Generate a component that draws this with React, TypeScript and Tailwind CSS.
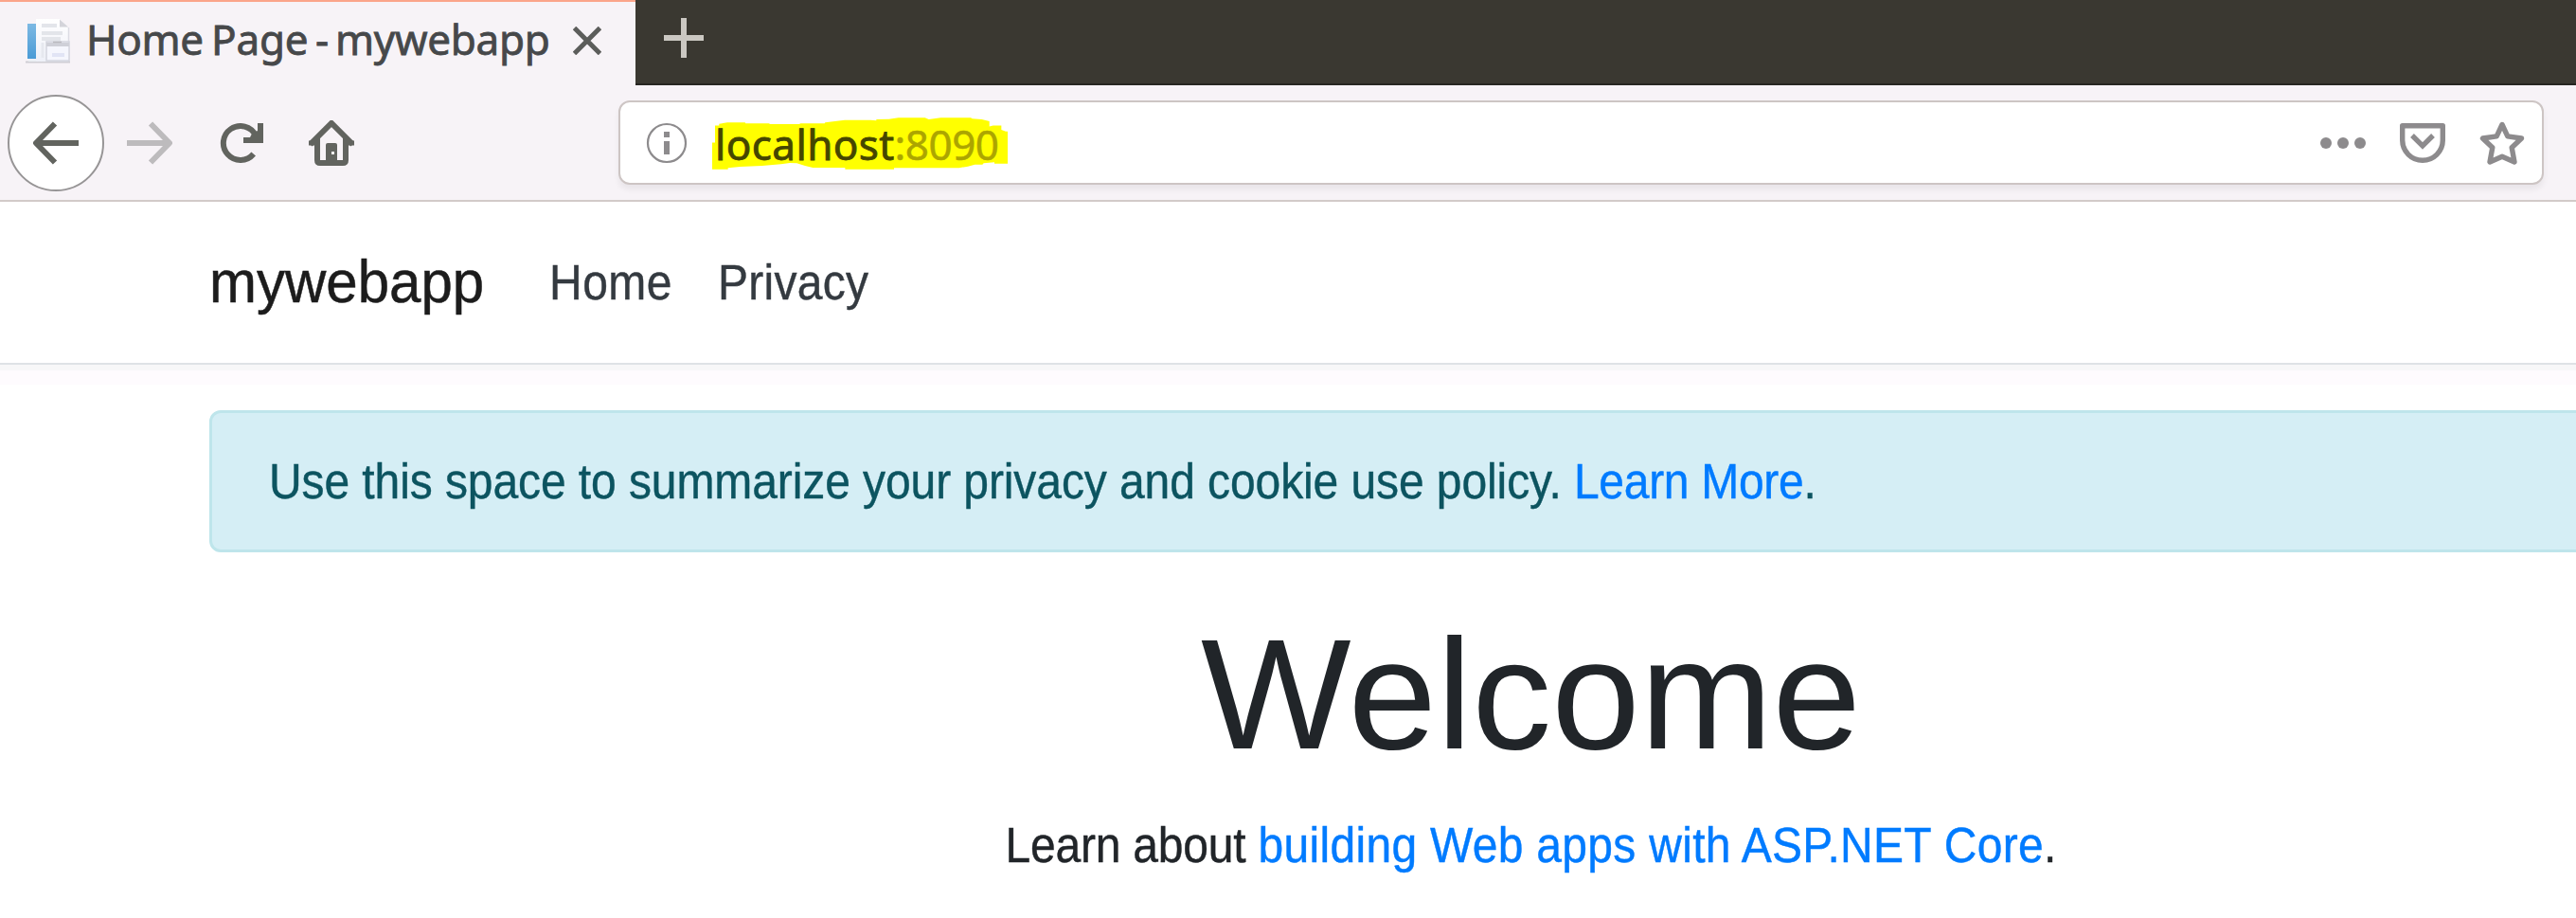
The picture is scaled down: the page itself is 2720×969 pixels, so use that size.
import type { ReactNode } from "react";

function Icon({ className = "", children }: { className?: string; children: ReactNode }) {
  return (
    <svg viewBox="0 0 48 48" className={`size-12 shrink-0 ${className}`} fill="none" stroke="currentColor" strokeWidth="6">
      {children}
    </svg>
  );
}

function Favicon() {
  return (
    <svg viewBox="0 0 48 48" className="size-12 shrink-0" fill="none">
      <defs>
        <linearGradient id="spine" x1="0" y1="0" x2="0" y2="1">
          <stop offset="0" stopColor="#7db9e3" />
          <stop offset="1" stopColor="#4a9bd6" />
        </linearGradient>
        <linearGradient id="sheet" x1="0" y1="0" x2="0" y2="1">
          <stop offset="0" stopColor="#ffffff" />
          <stop offset="1" stopColor="#eef0f8" />
        </linearGradient>
      </defs>
      <path d="M1 46.500H48" stroke="#cfced4" strokeWidth="2" />
      <path d="M4 43.500H13V46H4z" fill="#eceff4" />
      <rect x="3" y="6" width="9" height="37" fill="url(#spine)" />
      <path d="M12 1H37L46.500 11V46H12z" fill="url(#sheet)" />
      <path d="M37 1.500V9.500H46L37 1.500z" fill="#d4d4da" />
      <path d="M46.500 10V46" stroke="#dcdce4" strokeWidth="1.500" />
      <path d="M18 8H34M18 16H40M18 22H38" stroke="#e3e5ea" strokeWidth="4" />
      <path d="M19 26V42" stroke="#e6e8ef" strokeWidth="3" />
      <rect x="23" y="25" width="24" height="20" fill="#f5f6fd" stroke="#d3d5de" strokeWidth="1.500" />
      <path d="M23 28H47" stroke="#cfd0d8" strokeWidth="4" />
      <path d="M30 25.500H39" stroke="#b9b9bf" strokeWidth="1.500" />
      <path d="M29 39H42" stroke="#e1e4f5" strokeWidth="4" />
    </svg>
  );
}

function TabStrip() {
  return (
    <div className="flex h-[90px]">
      <div className="flex h-full w-[671px] shrink-0 items-start border-t-2 border-[#fba58a] bg-[#f7f3f7] pl-[26px]">
        <div className="pt-[17px]">
          <Favicon />
        </div>
        <div className="ml-[17px] flex pt-[9px] font-['Noto_Sans',sans-serif] text-[44px] leading-[60px] whitespace-nowrap text-[#46484a] [-webkit-text-stroke:0.8px_#46484a]">
          <span className="w-[132px] tracking-[-0.4px]">Home</span>
          <span className="w-[110px] tracking-[-0.2px]">Page</span>
          <span className="w-[21px]">-</span>
          <span className="w-[232px] tracking-[-0.3px]">mywebapp</span>
        </div>
        <svg viewBox="0 0 30 30" className="mt-[26px] ml-[19px] size-[30px]" stroke="#5c5d5b" strokeWidth="5">
          <path d="M1.500 1.500L28.500 28.500M28.500 1.500L1.500 28.500" />
        </svg>
      </div>
      <div className="flex h-full grow items-start border-b-2 border-[#272622] bg-[#3a3831] pl-[30px]">
        <svg viewBox="0 0 42 42" className="mt-[19px] size-[42px]" stroke="#cbc8c2" strokeWidth="6">
          <path d="M21 0V42M0 21H42" />
        </svg>
      </div>
    </div>
  );
}

function UrlBar() {
  return (
    <div className="mt-4 ml-[279px] flex h-[89px] w-[2033px] shrink-0 items-center rounded-[12px] border-2 border-[#cdc5c4] bg-white pl-[25px] shadow-[0_5px_6px_rgba(0,0,0,0.06)]">
      <Icon className="text-[#8d8b8d]">
        <circle cx="24" cy="24" r="20" strokeWidth="2.200" />
        <path d="M24 12V18M24 22V36" />
      </Icon>
      <div className="relative ml-[25px] flex font-['Noto_Sans',sans-serif] text-[44px] leading-[60px] whitespace-nowrap">
        <svg viewBox="336 104 936 164" className="absolute top-[3px] left-[-1px] h-[55px] w-[312px]" fill="#ffff00" preserveAspectRatio="none">
          <path d="M336 183H345V129H358V124L384 120H440L442 123H515L520 125H612L616 123H692L694 120L756 112H838L856 114V110L896 109L926 105H1010L1022 110L1060 105H1155L1160 108L1190 110L1214 116V132L1226 129H1252V143L1266 148H1272V249H1230V245L1196 248L1192 252H1168L1146 258L1118 263H912V267H757V262H655L630 256L604 248L582 247L554 251L494 256L424 259L386 263V267H336z" />
        </svg>
        <span className="relative top-[1px] pl-[2px] tracking-[0.4px] text-[#454600] [-webkit-text-stroke:0.8px_#454600]">localhost</span>
        <span className="relative top-[1px] tracking-[-0.5px] text-[#aca500] [-webkit-text-stroke:0.5px_#aca500]">:8090</span>
      </div>
      <Icon className="mr-9 ml-auto text-[#8d8b8d]">
        <g fill="currentColor" stroke="none">
          <circle cx="6" cy="24" r="6" />
          <circle cx="24" cy="24" r="6" />
          <circle cx="42" cy="24" r="6" />
        </g>
      </Icon>
      <Icon className="mr-9 text-[#8d8b8d]">
        <path d="M2.700 5.700H45.300V21A21.300 21.300 0 0 1 2.700 21z" strokeWidth="5.400" strokeLinejoin="round" />
        <path d="M13 16L24 27L35 16" strokeWidth="5.400" />
      </Icon>
      <Icon className="mr-[18px] text-[#8d8b8d]">
        <path
          d="M24 4.500L29.800 16.800L44.500 19L34.200 28.800L37 44L24 38.200L11 44L13.800 28.800L3.500 19L18.200 16.800z"
          strokeWidth="5.400"
          strokeLinejoin="round"
        />
      </Icon>
    </div>
  );
}

function Toolbar() {
  return (
    <div className="flex h-[123px] items-start border-b-2 border-[#d2cac9] bg-[#f7f3f7] pl-2">
      <div className="mt-[10px] flex size-[102px] shrink-0 items-center justify-center rounded-full border-2 border-[#979596] bg-white text-[#62645f]">
        <Icon>
          <path d="M2 24H48M23 3.500L3 24L23 44.500" strokeLinejoin="round" />
        </Icon>
      </div>
      <Icon className="mt-[37px] ml-6 text-[#bdbbbd]">
        <path d="M0 24H46M25 3.500L45 24L25 44.500" strokeLinejoin="round" />
      </Icon>
      <Icon className="mt-[37px] ml-12 text-[#62645f]">
        <path d="M37.700 35.500A18 18 0 1 1 40 16" />
        <path d="M42 3H48V24H27V18H34L36 14L42 11z" fill="currentColor" stroke="none" />
      </Icon>
      <Icon className="mt-[37px] ml-12 text-[#62645f]">
        <path d="M1.500 25.500L24 3L46.500 25.500" />
        <path d="M9 19V42Q9 45 12 45H36Q39 45 39 42V19" />
        <path d="M0 24H9M39 24H48" strokeWidth="5" />
        <path d="M18 45V26Q18 24 20 24H28Q30 24 30 26V45z" fill="currentColor" stroke="none" />
        <rect x="24" y="33" width="3" height="3" fill="#f7f3f7" stroke="none" />
      </Icon>
      <UrlBar />
    </div>
  );
}

export default function App() {
  return (
    <div className="h-[969px] w-full overflow-hidden bg-white font-['Liberation_Sans',Arial,sans-serif] text-[48px] leading-[73px] text-[#212529]">
      <TabStrip />
      <Toolbar />
      <nav className="flex h-[172px] items-start border-b-2 border-[#dee2e6] bg-white pl-[221px] whitespace-nowrap shadow-[0_6px_0_#f7f7f8,0_21px_0_#fefbfe]">
        <a className="mt-[47px] w-[359px] origin-[0_59px] scale-y-[1.05] text-[60px] leading-[77px] text-[#1c1c1c] [-webkit-text-stroke:0.5px_#1c1c1c]">mywebapp</a>
        <a className="mt-[50px] w-[178px] origin-[0_53px] scale-y-[1.08] tracking-[0.5px] text-[#343a40] [-webkit-text-stroke:0.4px_#343a40]">Home</a>
        <a className="mt-[50px] origin-[0_53px] scale-y-[1.08] tracking-[0.27px] text-[#343a40] [-webkit-text-stroke:0.4px_#343a40]">Privacy</a>
      </nav>
      <main className="ml-[221px] w-[2791px] pt-12">
        <div className="h-[150px] rounded-[12px] border-[3px] border-[#bee5eb] bg-[#d5eef5] pt-[37px] pl-[60px] whitespace-nowrap text-[#0c5460]">
          <p className="origin-[0_53px] scale-y-[1.08] tracking-[-0.09px] [-webkit-text-stroke:0.4px]">
            Use this space to summarize your privacy and cookie use policy.{" "}
            <span className="tracking-[-0.3px]">
              <a className="text-[#007bff]">Learn More</a>.
            </span>
          </p>
        </div>
        <h1 className="mt-[55px] origin-[0_152px] scale-y-[0.985] text-center text-[168px] leading-[188px]">Welcome</h1>
        <p className="mt-[31px] origin-[0_53px] scale-y-[1.08] text-center whitespace-nowrap [-webkit-text-stroke:0.4px]">
          <span className="tracking-[-0.2px]">Learn about </span>
          <span className="tracking-[0.29px]">
            <a className="text-[#007bff]">building Web apps with ASP.NET Core</a>.
          </span>
        </p>
      </main>
    </div>
  );
}
